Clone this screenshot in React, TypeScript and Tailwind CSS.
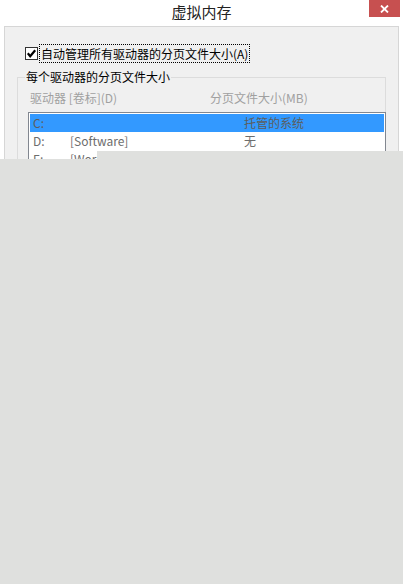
import React from 'react'

const font = { fontFamily: '"Noto Sans CJK SC", "Noto Sans", sans-serif' }

function CheckBox() {
  return (
    <div className="w-[13px] h-[13px] border border-[#333333] bg-white flex items-center justify-center">
      <svg width="11" height="11" viewBox="0 0 11 11">
        <path d="M1.8 5.3 L4.2 8.2 L9.2 2.2" fill="none" stroke="#000" strokeWidth="2.2" />
      </svg>
    </div>
  )
}

const rows = [
  { drive: 'C:', label: '', size: '托管的系统', selected: true },
  { drive: 'D:', label: '[Software]', size: '无', selected: false },
  { drive: 'E:', label: '[Work]', size: '无', selected: false },
]

export default function App() {
  return (
    <div className="relative w-[403px] h-[584px] bg-[#dfe0de] overflow-hidden flex flex-col" style={font}>
      <div className="h-[159px] shrink-0 bg-white overflow-hidden flex flex-col">
        {/* title bar */}
        <div className="relative h-[26px] shrink-0 flex items-center justify-center">
          <span className="text-[15px] leading-[20px] text-[#222] -mt-[2px]">虚拟内存</span>
          <div className="absolute right-[3px] top-0 w-[31px] h-[17px] bg-[#c75050] flex items-center justify-center">
            <svg width="9" height="8" viewBox="0 0 9 8">
              <path d="M1 0.5 L8 7.5 M8 0.5 L1 7.5" stroke="#fff" strokeWidth="1.8" />
            </svg>
          </div>
        </div>

        {/* body */}
        <div className="flex-1 mx-[4px] border border-b-0 border-[#d6d6d6] bg-[#f0f0f0]">
          <div className="flex items-center pl-[20px] pt-[17px]">
            <CheckBox />
            <div className="ml-[1px] border border-dotted border-black px-[1px] h-[19px] flex items-center">
              <span className="text-[12px] leading-[16px] text-black">自动管理所有驱动器的分页文件大小(A)</span>
            </div>
          </div>

          <fieldset className="mx-[12px] mt-[6px] border border-[#dcdcdc] p-0 min-w-0">
            <legend className="ml-[7px] px-[1px] text-[12px] leading-[16px] text-black">每个驱动器的分页文件大小</legend>
            <div className="pl-[10px]">
              <div className="flex text-[12px] leading-[16px] text-[#a0a0a0] pt-[5px] pl-[2px]">
                <span className="w-[180px]">驱动器 [卷标](D)</span>
                <span>分页文件大小(MB)</span>
              </div>
              <div className="mt-[6px] -mr-[1px] border border-[#828790] bg-white p-[1px]">
                {rows.map((r) => (
                  <div
                    key={r.drive}
                    className={`flex h-[18px] items-center text-[12px] leading-[16px] pl-[3px] ${
                      r.selected ? 'bg-[#3399ff] text-[#5d5d5d]' : 'text-[#6d6d6d]'
                    }`}
                  >
                    <span className="w-[37px]">{r.drive}</span>
                    <span className="w-[174px]">{r.label}</span>
                    <span>{r.size}</span>
                  </div>
                ))}
              </div>
            </div>
          </fieldset>
        </div>
      </div>
      <div className="absolute left-[97px] right-0 top-[151px] h-[8px] bg-[#dfe0de]" />
    </div>
  )
}
